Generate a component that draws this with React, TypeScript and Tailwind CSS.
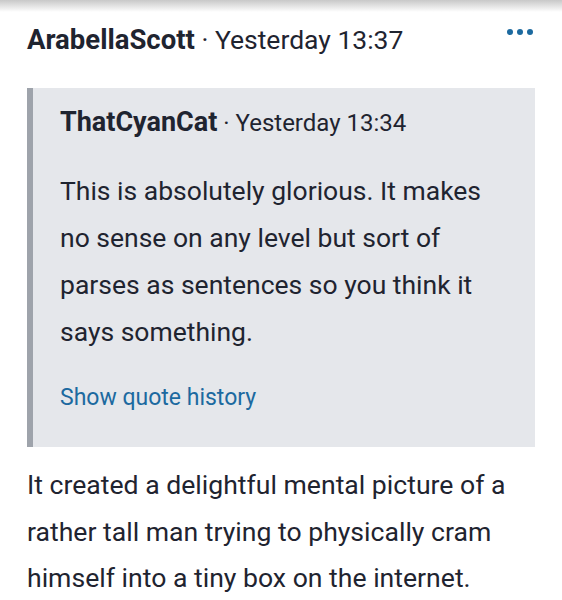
export default function App() {
  return (
    <div className="min-h-[600px] w-[562px] overflow-hidden bg-white font-['Roboto',sans-serif] text-[#1f2430]">
      <div className="h-[12px] bg-gradient-to-b from-[#c8c8c8] to-white" />
      <div className="px-[27px] pt-[12px]">
        <div className="flex h-[32px] items-center justify-between">
          <p className="whitespace-nowrap text-[26.5px] leading-[32px]">
            <span className="text-[27.5px] font-bold">ArabellaScott</span>
            <span> · Yesterday 13:37</span>
          </p>
          <button type="button" className="mr-[2px] flex items-center gap-[4px] pb-[16px]">
            <span className="h-[6px] w-[6px] rounded-full bg-[#1c6aa0]" />
            <span className="h-[6px] w-[6px] rounded-full bg-[#1c6aa0]" />
            <span className="h-[6px] w-[6px] rounded-full bg-[#1c6aa0]" />
          </button>
        </div>

        <blockquote className="mt-[32px] border-l-[6px] border-[#9ea3ab] bg-[#e5e7eb] pb-[34px] pl-[27px] pr-[36px] pt-[19px]">
          <p className="whitespace-nowrap text-[24px] leading-[30px]">
            <span className="text-[27px] font-bold">ThatCyanCat</span>
            <span> · Yesterday 13:34</span>
          </p>
          <p className="mt-[29px] text-[26.5px] leading-[47px]">
            This is absolutely glorious. It makes no sense on any level but sort of parses as
            sentences so you think it says something.
          </p>
          <a href="#" className="mt-[28px] block text-[23px] leading-[30px] text-[#1c6aa0]">
            Show quote history
          </a>
        </blockquote>

        <p className="mt-[15px] text-[26.6px] leading-[46.5px]">
          It created a delightful mental picture of a rather tall man trying to physically cram
          himself into a tiny box on the internet.
        </p>
      </div>
    </div>
  );
}
